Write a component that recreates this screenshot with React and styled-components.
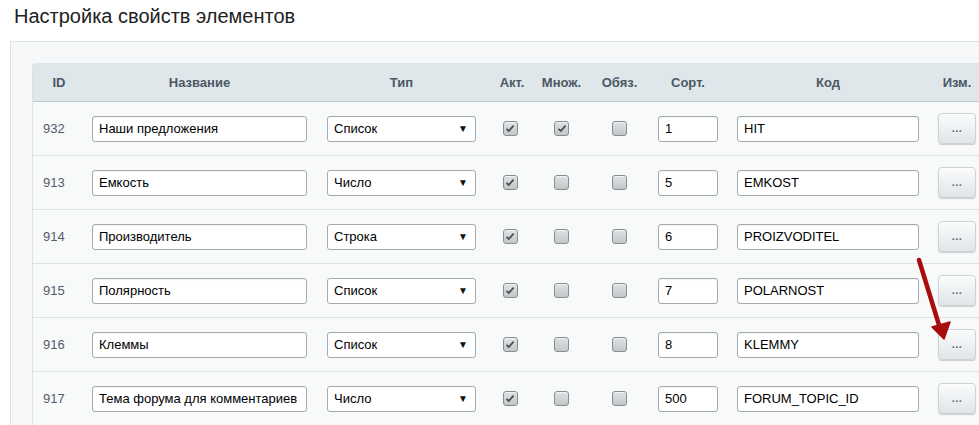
import React from 'react';
import styled, { createGlobalStyle } from 'styled-components';

const GlobalStyle = createGlobalStyle`
  body {
    margin: 0;
    background: #fff;
    font-family: "Liberation Sans", Arial, sans-serif;
    overflow: hidden;
  }
`;

const Page = styled.div`
  position: relative;
  width: 979px;
  height: 425px;
  overflow: hidden;
`;

const Title = styled.h1`
  margin: 0;
  padding: 4px 0 0 14px;
  height: 41px;
  box-sizing: border-box;
  font-size: 20px;
  line-height: 24px;
  font-weight: normal;
  color: #222;
`;

const Panel = styled.div`
  margin-left: 10px;
  width: 1040px;
  padding: 21px;
  border: 1px solid #dce1e4;
  background: #f5f7f8;
`;

// ширины колонок: ID, Название, Тип, Акт., Множ., Обяз., Сорт., Код, Изм.
const columns = '52px 229px 175px 42px 61px 55px 82px 198px 60px 40px';

const Table = styled.div`
  border-left: 1px solid #dce1e4;
  border-radius: 4px 0 0 0;
  overflow: hidden;
`;

const HeadRow = styled.div`
  display: grid;
  grid-template-columns: ${columns};
  height: 38px;
  align-items: center;
  background: #e0e7ea;
  border-bottom: 1px solid #c4cbcf;
`;

const HeadCell = styled.div`
  text-align: center;
  font-size: 13px;
  font-weight: bold;
  color: #4b5865;
  margin-left: ${(p) => p.$shift || 0}px;
`;

const Row = styled.div`
  display: grid;
  grid-template-columns: ${columns};
  height: 53px;
  align-items: center;
  justify-items: center;
  background: #f8f9f9;
  border-bottom: 1px solid #dce1e4;
`;

const IdCell = styled.div`
  justify-self: start;
  padding-left: 10px;
  font-size: 13px;
  color: #535c69;
`;

const TextInput = styled.input`
  box-sizing: border-box;
  width: ${(p) => p.$w}px;
  height: 26px;
  padding: 0 6px;
  border: 1px solid #a3abb1;
  border-radius: 3px;
  background: #fff;
  font-family: "Liberation Sans", Arial, sans-serif;
  font-size: 13px;
  color: #000;
  outline: none;
  box-shadow: inset 0 1px 1px rgba(0, 0, 0, 0.05);
`;

const Select = styled.div`
  box-sizing: border-box;
  width: 149px;
  height: 26px;
  padding: 0 7px 0 6px;
  display: flex;
  align-items: center;
  justify-content: space-between;
  border: 1px solid #a3abb1;
  border-radius: 3px;
  background: #fff;
  font-size: 13px;
  color: #000;
`;

const Caret = styled.span`
  font-size: 10px;
  color: #111;
`;

const Check = styled.span`
  box-sizing: border-box;
  width: 15px;
  height: 15px;
  display: flex;
  align-items: center;
  justify-content: center;
  border: 1px solid #868d92;
  border-radius: 3px;
  background: linear-gradient(#dfe2e4, #c3c7ca);
  box-shadow: inset 0 1px 0 rgba(255, 255, 255, 0.6);
`;

const EditButton = styled.button`
  width: 38px;
  height: 31px;
  padding: 0;
  border: 1px solid #ccd3d7;
  border-radius: 4px;
  background: linear-gradient(#fbfcfc, #dfe5e8);
  box-shadow: 0 1px 1px rgba(0, 0, 0, 0.18), inset 0 1px 0 #fff;
  font-family: "Liberation Sans", Arial, sans-serif;
  font-size: 11px;
  font-weight: bold;
  color: #5c6a74;
  letter-spacing: 0.5px;
  line-height: 1;
`;

const Arrow = styled.svg`
  position: absolute;
  left: 910px;
  top: 250px;
  pointer-events: none;
`;

const props = [
  { id: 932, name: 'Наши предложения', type: 'Список', act: true, multi: true, req: false, sort: '1', code: 'HIT' },
  { id: 913, name: 'Емкость', type: 'Число', act: true, multi: false, req: false, sort: '5', code: 'EMKOST' },
  { id: 914, name: 'Производитель', type: 'Строка', act: true, multi: false, req: false, sort: '6', code: 'PROIZVODITEL' },
  { id: 915, name: 'Полярность', type: 'Список', act: true, multi: false, req: false, sort: '7', code: 'POLARNOST' },
  { id: 916, name: 'Клеммы', type: 'Список', act: true, multi: false, req: false, sort: '8', code: 'KLEMMY' },
  { id: 917, name: 'Тема форума для комментариев', type: 'Число', act: true, multi: false, req: false, sort: '500', code: 'FORUM_TOPIC_ID' },
];

const Checkbox = ({ checked }) => (
  <Check>
    {checked && (
      <svg width="10" height="9" viewBox="0 0 10 9">
        <path d="M1.5 4.8 L3.8 7 L8.6 1.6" fill="none" stroke="#4a4f54" strokeWidth="1.8" />
      </svg>
    )}
  </Check>
);

const App = () => (
  <Page>
    <GlobalStyle />
    <Title>Настройка свойств элементов</Title>
    <Panel>
      <Table>
        <HeadRow>
          <HeadCell>ID</HeadCell>
          <HeadCell>Название</HeadCell>
          <HeadCell>Тип</HeadCell>
          <HeadCell $shift={4}>Акт.</HeadCell>
          <HeadCell>Множ.</HeadCell>
          <HeadCell>Обяз.</HeadCell>
          <HeadCell>Сорт.</HeadCell>
          <HeadCell>Код</HeadCell>
          <HeadCell>Изм.</HeadCell>
          <div />
        </HeadRow>
        {props.map((p) => (
          <Row key={p.id}>
            <IdCell>{p.id}</IdCell>
            <TextInput $w={215} value={p.name} readOnly />
            <Select>
              <span>{p.type}</span>
              <Caret>▼</Caret>
            </Select>
            <Checkbox checked={p.act} />
            <Checkbox checked={p.multi} />
            <Checkbox checked={p.req} />
            <TextInput $w={60} value={p.sort} readOnly />
            <TextInput $w={182} value={p.code} readOnly />
            <EditButton>...</EditButton>
            <div />
          </Row>
        ))}
      </Table>
    </Panel>
    <Arrow width="50" height="100" viewBox="0 0 50 100">
      <path d="M9 10 L29 75" stroke="#a80c0c" strokeWidth="4.5" strokeLinecap="round" />
      <path d="M22 77 L40 72 L34 89 Z" fill="#a80c0c" stroke="#a80c0c" strokeWidth="1.5" strokeLinejoin="round" />
    </Arrow>
  </Page>
);

export default App;
